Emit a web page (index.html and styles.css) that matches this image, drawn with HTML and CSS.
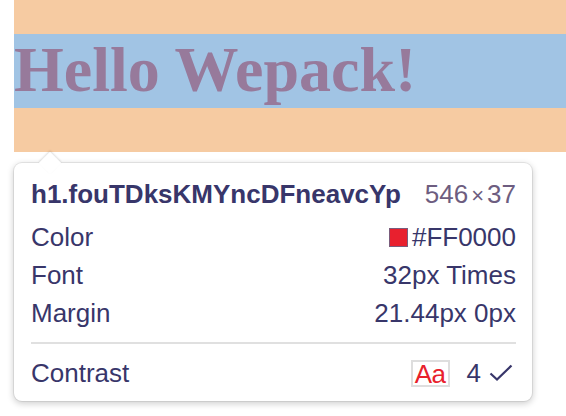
FILE: index.html
```html
<!DOCTYPE html>
<html>
<head>
<meta charset="utf-8">
<link rel="stylesheet" href="styles.css">
</head>
<body>
<div class="page">
  <div class="margin-box">
    <h1 class="heading">Hello Wepack!</h1>
  </div>
  <div class="tooltip">
    <div class="arrow"></div>
    <div class="title-row">
      <span class="selector">h1.fouTDksKMYncDFneavcYp</span>
      <span class="size">546<span class="times">×</span>37</span>
    </div>
    <div class="row"><span>Color</span><span class="value"><span class="swatch"></span>#FF0000</span></div>
    <div class="row"><span>Font</span><span class="value">32px Times</span></div>
    <div class="row"><span>Margin</span><span class="value">21.44px 0px</span></div>
    <div class="divider"></div>
    <div class="row"><span>Contrast</span><span class="value"><span class="aa">Aa</span><span class="ratio">4</span><svg class="check" width="24" height="18" viewBox="0 0 24 18"><path d="M1.5 9.5 L8 15.5 L22.5 1.5" fill="none" stroke="#38366a" stroke-width="2.2"/></svg></span></div>
  </div>
</div>
</body>
</html>
```
FILE: styles.css
```css
html, body {
  margin: 0;
  padding: 0;
  background: #ffffff;
}
.page {
  width: 566px;
  height: 416px;
  overflow: hidden;
}
.margin-box {
  margin-left: 14px;
  height: 152px;
  padding-top: 34px;
  box-sizing: border-box;
  background: #f6cba2;
}
.heading {
  margin: 0;
  height: 74px;
  line-height: 72px;
  background: #a1c4e4;
  color: #977a9b;
  font-family: "Liberation Serif", "Times New Roman", serif;
  font-weight: bold;
  font-size: 64px;
  white-space: nowrap;
}
.tooltip {
  position: relative;
  margin-top: 11px;
  margin-left: 14px;
  width: 518px;
  height: 238px;
  box-sizing: border-box;
  padding: 12px 16px 0 17px;
  background: #ffffff;
  border-radius: 8px;
  box-shadow: 0 0 0 1px rgba(0,0,0,0.07), 0 2px 6px 1px rgba(0,0,0,0.18);
  font-family: "Liberation Sans", Arial, Helvetica, sans-serif;
  font-size: 26px;
  color: #38366a;
}
.arrow {
  position: absolute;
  left: 28px;
  top: -8px;
  width: 16px;
  height: 16px;
  background: #ffffff;
  transform: rotate(45deg);
  box-shadow: -1px -1px 2px rgba(0,0,0,0.12);
}
.title-row {
  position: relative;
  display: flex;
  justify-content: space-between;
  align-items: baseline;
  height: 38px;
  line-height: 38px;
  margin-bottom: 5px;
}
.selector {
  font-weight: bold;
}
.size {
  color: #6d5d80;
}
.times {
  margin: 0 3px;
  font-size: 22px;
}
.row {
  display: flex;
  justify-content: space-between;
  align-items: center;
  height: 38px;
  line-height: 38px;
}
.value {
  display: flex;
  align-items: center;
}
.swatch {
  width: 19px;
  height: 19px;
  margin-right: 4px;
  background: #e8202e;
  border: 1px solid #7a5c7c;
  box-sizing: border-box;
}
.divider {
  height: 2px;
  background: #e0e0e0;
  margin: 10px 0 10px 0;
}
.aa {
  display: inline-block;
  width: 39px;
  height: 27px;
  box-sizing: border-box;
  border: 2px solid #dedede;
  color: #e8212c;
  font-size: 26px;
  line-height: 24px;
  letter-spacing: -0.5px;
  text-align: center;
  margin-right: 17px;
}
.ratio {
  margin-right: 8px;
}
.check {
  display: block;
  margin-right: 3px;
}
```
